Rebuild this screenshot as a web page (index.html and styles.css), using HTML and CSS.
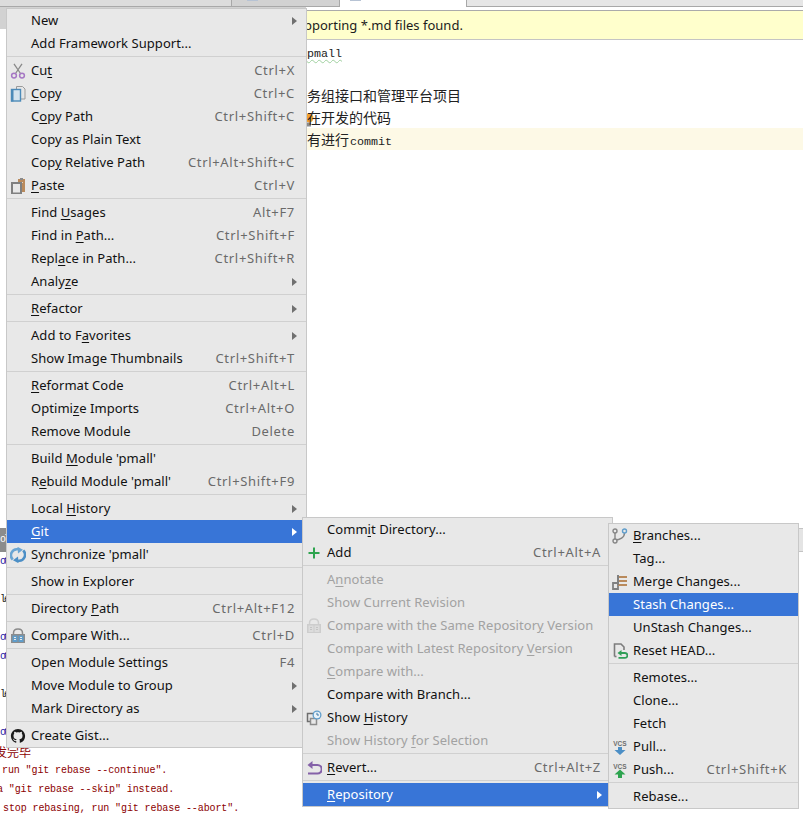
FILE: index.html
```html
<!DOCTYPE html>
<html lang="en">
<head>
<meta charset="utf-8">
<title>pmall</title>
<link rel="stylesheet" href="styles.css">
</head>
<body>
<svg class="defs" aria-hidden="true">
  <symbol id="i-cut" viewBox="0 0 16 16">
    <path d="M5.500 10.500 12 .8M10.500 10.500 4 .8" fill="none" stroke="#8a8a8a" stroke-width="1.300"/>
    <circle cx="4" cy="12.600" r="2.400" fill="none" stroke="#a678c4" stroke-width="1.500"/>
    <circle cx="12" cy="12.600" r="2.400" fill="none" stroke="#a678c4" stroke-width="1.500"/>
  </symbol>
  <symbol id="i-copy" viewBox="0 0 16 16">
    <path d="M6.500 .5h6l2.500 2.500v10h-8.500z" fill="#e6e6e6" stroke="#9a9a9a"/>
    <rect x="1.500" y="3.500" width="9" height="11.500" fill="#d4e3ee" stroke="#4c8ab8" stroke-width="1.400"/>
    <rect x="1" y="3" width="2.500" height="12.500" fill="#4c8ab8"/>
  </symbol>
  <symbol id="i-paste" viewBox="0 0 16 16">
    <rect x="8" y="1" width="7" height="13" fill="#b98a5c"/>
    <rect x="10" y="0" width="3" height="2" fill="#8a8a8a"/>
    <rect x="10" y="4" width="3" height="1" fill="#e6d6c4"/>
    <rect x="2" y="5" width="9" height="10.500" fill="#e8e8e8" stroke="#808080" stroke-width="2"/>
  </symbol>
  <symbol id="i-sync" viewBox="0 0 16 16">
    <path d="M2.800 12.500A6 6 0 0 1 8 2.300" fill="none" stroke="#6aa5d3" stroke-width="2.600"/>
    <path d="M7.500 -.2 13 2.800 8 6.500z" fill="#6aa5d3"/>
    <path d="M13.200 3.500A6 6 0 0 1 8 13.700" fill="none" stroke="#4c8fc6" stroke-width="2.600"/>
    <path d="M8.500 16.200 3 13.200 8 9.500z" fill="#4c8fc6"/>
  </symbol>
  <symbol id="i-compare" viewBox="0 0 16 16">
    <path d="M3.500 7V5C3.500 2.500 5.500 1 8 1s4.500 1.500 4.500 4V7" fill="none" stroke="#8a8a8a" stroke-width="1.500"/>
    <rect x="1" y="6" width="14" height="9" fill="#8c8c8c"/>
    <rect x="2.500" y="7.500" width="5" height="6.500" fill="#5f9dcb"/>
    <rect x="8.500" y="7.500" width="5" height="6.500" fill="#5f9dcb"/>
    <path d="M4 9.500h2M4 11.500h2M10 9.500h2M10 11.500h2" stroke="#e8e8e8"/>
  </symbol>
  <symbol id="i-compare-off" viewBox="0 0 16 16">
    <path d="M3.500 7V5C3.500 2.500 5.500 1 8 1s4.500 1.500 4.500 4V7" fill="none" stroke="#cfcfcf" stroke-width="1.500"/>
    <rect x="1" y="6" width="14" height="9" fill="#cdcdcd"/>
    <rect x="2.500" y="7.500" width="5" height="6.500" fill="#dcdcdc"/>
    <rect x="8.500" y="7.500" width="5" height="6.500" fill="#dcdcdc"/>
    <path d="M4 9.500h2M4 11.500h2M10 9.500h2M10 11.500h2" stroke="#c4c4c4"/>
  </symbol>
  <symbol id="i-github" viewBox="-1 -1 18 18">
    <path fill="#1a1a1a" d="M8 0C3.580 0 0 3.580 0 8c0 3.540 2.290 6.530 5.470 7.590.4.070.55-.17.55-.38 0-.19-.01-.82-.01-1.490-2.010.37-2.530-.49-2.690-.94-.09-.23-.48-.94-.82-1.130-.28-.15-.68-.52-.01-.53.63-.01 1.080.58 1.230.82.72 1.210 1.870.87 2.330.66.07-.52.28-.87.51-1.070-1.780-.2-3.640-.89-3.640-3.950 0-.87.31-1.590.82-2.150-.08-.2-.36-1.020.08-2.120 0 0 .67-.21 2.200.82.64-.18 1.320-.27 2-.27.68 0 1.360.09 2 .27 1.530-1.040 2.200-.82 2.200-.82.44 1.100.16 1.920.08 2.120.51.56.82 1.270.82 2.150 0 3.070-1.870 3.750-3.650 3.950.29.25.54.73.54 1.480 0 1.070-.01 1.930-.01 2.200 0 .21.15.46.55.38A8.013 8.013 0 0016 8c0-4.420-3.580-8-8-8z"/>
  </symbol>
  <symbol id="i-add" viewBox="0 0 16 16">
    <path d="M8 2.500v11M2.500 8h11" stroke="#2ea44f" stroke-width="2" fill="none"/>
  </symbol>
  <symbol id="i-history" viewBox="0 0 16 16">
    <rect x="1.500" y="3.500" width="8" height="8" fill="#e8e8e8" stroke="#6e6e6e" stroke-width="1.500"/>
    <rect x="4.500" y="8.500" width="6" height="6" fill="#e8e8e8" stroke="#8c8c8c" stroke-width="1.500"/>
    <circle cx="11" cy="5" r="4.500" fill="#5f9dcb"/>
    <circle cx="11" cy="5" r="3.200" fill="#e9f2f8"/>
    <path d="M11 2.800V5h2" fill="none" stroke="#3c79a8"/>
  </symbol>
  <symbol id="i-revert" viewBox="0 0 16 16">
    <path d="M4 5h7.500a3.200 3.200 0 0 1 0 8.500H2" fill="none" stroke="#8461a8" stroke-width="2.200"/>
    <path d="M6.500 1v8L1.500 5z" fill="#8461a8"/>
  </symbol>
  <symbol id="i-branches" viewBox="0 0 16 16">
    <path d="M3 4v8M3 12C8 12 12.500 9.500 12.500 5" fill="none" stroke="#858585" stroke-width="1.400"/>
    <circle cx="3" cy="3" r="2" fill="#e8e8e8" stroke="#858585" stroke-width="1.400"/>
    <circle cx="3" cy="13" r="2" fill="#e8e8e8" stroke="#858585" stroke-width="1.400"/>
    <circle cx="12.500" cy="3" r="2" fill="#e8e8e8" stroke="#5f9dcb" stroke-width="1.400"/>
  </symbol>
  <symbol id="i-merge" viewBox="0 0 16 16">
    <path d="M1 9h5v6H1z" fill="#e8e8e8" stroke="#808080" stroke-width="1.800"/>
    <path d="M6 2h9v2H6zM6 6h9v2H6zM6 10h9v2H6z" fill="#b98a5c"/>
    <path d="M5 1h2v10H5z" fill="#808080"/>
  </symbol>
  <symbol id="i-reset" viewBox="0 0 16 16">
    <path d="M2.500 13.500V1h6.500l3 3v3" fill="#e8e8e8" stroke="#7c7c7c" stroke-width="1.600"/>
    <path d="M2.500 13.500h2" stroke="#7c7c7c" stroke-width="1.600"/>
    <path d="M8 10h5a2.200 2.200 0 0 1 0 4.800H6.500" fill="none" stroke="#2f9e57" stroke-width="1.800"/>
    <path d="M9.500 7v6L5.500 10z" fill="#2f9e57"/>
  </symbol>
  <symbol id="i-pull" viewBox="0 0 16 16">
    <text class="vcs-text" x="8" y="6.500" text-anchor="middle">VCS</text>
    <path d="M6 8h4v3h3.500L8 16 2.500 11H6z" fill="#4c8fc6"/>
  </symbol>
  <symbol id="i-push" viewBox="0 0 16 16">
    <text class="vcs-text" x="8" y="6.500" text-anchor="middle">VCS</text>
    <path d="M8 7.500 13.500 12.500H10V16H6v-3.500H2.500z" fill="#2ea44f"/>
  </symbol>
</svg>

<div class="app">
  <header class="tabbar">
    <div class="tab-rest"></div>
    <div class="tab-inactive"><span class="tab-mark tab-mark-first"></span></div>
    <div class="tab-active"><span class="tab-mark"></span></div>
    <div class="tab-fill"></div>
  </header>

  <div class="workspace">
    <aside class="side"><div class="side-toolbar"></div></aside>
    <main class="editor">
      <div class="banner">pporting *.md files found.</div>
      <div class="code">
        <div class="line"><span class="squiggle">pmall</span></div>
        <div class="line"></div>
        <div class="line">务组接口和管理平台项目</div>
        <div class="line"><svg class="bulb" viewBox="0 0 8 14" aria-hidden="true"><circle cx="3" cy="5" r="4.500" fill="#f0a030"/><rect x="0" y="9.500" width="5" height="4" fill="#8a8a8a"/></svg><span class="over">在开发的代码</span></div>
        <div class="line line-current">有进行<span class="mono">commit</span></div>
      </div>
    </main>
  </div>

  <section class="console">
    <div class="console-head"><span class="console-tab">ol</span></div>
    <div class="console-line info">ot</div>
    <div class="console-line"></div>
    <div class="console-line plain">le</div>
    <div class="console-line"></div>
    <div class="console-line info">ot</div>
    <div class="console-line info">ot</div>
    <div class="console-line"></div>
    <div class="console-line plain">le</div>
    <div class="console-line"></div>
    <div class="console-line info">ot</div>
    <div class="console-line err err-cjk">发完毕</div>
    <div class="console-line err err-a">run "git rebase --continue".</div>
    <div class="console-line err err-b">a "git rebase --skip" instead.</div>
    <div class="console-line err err-c">stop rebasing, run "git rebase --abort".</div>
  </section>

  <nav class="menu menu-main">
    <div class="row"><span class="ico"></span><span class="label">New</span><i class="arrow"></i></div>
    <div class="row"><span class="ico"></span><span class="label">Add Framework Support...</span></div>
    <hr class="sep">
    <div class="row"><svg class="ico"><use href="#i-cut"/></svg><span class="label">Cu<u>t</u></span><span class="key">Ctrl+X</span></div>
    <div class="row"><svg class="ico"><use href="#i-copy"/></svg><span class="label"><u>C</u>opy</span><span class="key">Ctrl+C</span></div>
    <div class="row"><span class="ico"></span><span class="label">C<u>o</u>py Path</span><span class="key">Ctrl+Shift+C</span></div>
    <div class="row"><span class="ico"></span><span class="label">Copy as Plain Text</span></div>
    <div class="row"><span class="ico"></span><span class="label">Cop<u>y</u> Relative Path</span><span class="key">Ctrl+Alt+Shift+C</span></div>
    <div class="row"><svg class="ico"><use href="#i-paste"/></svg><span class="label"><u>P</u>aste</span><span class="key">Ctrl+V</span></div>
    <hr class="sep">
    <div class="row"><span class="ico"></span><span class="label">Find <u>U</u>sages</span><span class="key">Alt+F7</span></div>
    <div class="row"><span class="ico"></span><span class="label">Find in <u>P</u>ath...</span><span class="key">Ctrl+Shift+F</span></div>
    <div class="row"><span class="ico"></span><span class="label">Repl<u>a</u>ce in Path...</span><span class="key">Ctrl+Shift+R</span></div>
    <div class="row"><span class="ico"></span><span class="label">Analy<u>z</u>e</span><i class="arrow"></i></div>
    <hr class="sep">
    <div class="row"><span class="ico"></span><span class="label"><u>R</u>efactor</span><i class="arrow"></i></div>
    <hr class="sep">
    <div class="row"><span class="ico"></span><span class="label">Add to F<u>a</u>vorites</span><i class="arrow"></i></div>
    <div class="row"><span class="ico"></span><span class="label">Show Image Thumbnails</span><span class="key">Ctrl+Shift+T</span></div>
    <hr class="sep">
    <div class="row"><span class="ico"></span><span class="label"><u>R</u>eformat Code</span><span class="key">Ctrl+Alt+L</span></div>
    <div class="row"><span class="ico"></span><span class="label">Optimi<u>z</u>e Imports</span><span class="key">Ctrl+Alt+O</span></div>
    <div class="row"><span class="ico"></span><span class="label">Remove Module</span><span class="key">Delete</span></div>
    <hr class="sep">
    <div class="row"><span class="ico"></span><span class="label">Build <u>M</u>odule 'pmall'</span></div>
    <div class="row"><span class="ico"></span><span class="label">R<u>e</u>build Module 'pmall'</span><span class="key">Ctrl+Shift+F9</span></div>
    <hr class="sep">
    <div class="row"><span class="ico"></span><span class="label">Local <u>H</u>istory</span><i class="arrow"></i></div>
    <div class="row active"><span class="ico"></span><span class="label"><u>G</u>it</span><i class="arrow"></i></div>
    <div class="row"><svg class="ico"><use href="#i-sync"/></svg><span class="label">Synchronize 'pmall'</span></div>
    <hr class="sep">
    <div class="row"><span class="ico"></span><span class="label">Show in Explorer</span></div>
    <hr class="sep">
    <div class="row"><span class="ico"></span><span class="label">Directory <u>P</u>ath</span><span class="key">Ctrl+Alt+F12</span></div>
    <hr class="sep">
    <div class="row"><svg class="ico"><use href="#i-compare"/></svg><span class="label">Compare With...</span><span class="key">Ctrl+D</span></div>
    <hr class="sep">
    <div class="row"><span class="ico"></span><span class="label">Open Module Settings</span><span class="key">F4</span></div>
    <div class="row"><span class="ico"></span><span class="label">Move Module to Group</span><i class="arrow"></i></div>
    <div class="row"><span class="ico"></span><span class="label">Mark Directory as</span><i class="arrow"></i></div>
    <hr class="sep">
    <div class="row"><svg class="ico"><use href="#i-github"/></svg><span class="label">Create Gist...</span></div>
  </nav>

  <nav class="menu menu-git">
    <div class="row"><span class="ico"></span><span class="label">Comm<u>i</u>t Directory...</span></div>
    <div class="row"><svg class="ico"><use href="#i-add"/></svg><span class="label">Add</span><span class="key">Ctrl+Alt+A</span></div>
    <hr class="sep">
    <div class="row off"><span class="ico"></span><span class="label">A<u>n</u>notate</span></div>
    <div class="row off"><span class="ico"></span><span class="label">Show Current Revision</span></div>
    <div class="row off"><svg class="ico"><use href="#i-compare-off"/></svg><span class="label">Compare with the Same Repositor<u>y</u> Version</span></div>
    <div class="row off"><span class="ico"></span><span class="label">Compare with Latest Repository <u>V</u>ersion</span></div>
    <div class="row off"><span class="ico"></span><span class="label"><u>C</u>ompare with...</span></div>
    <div class="row"><span class="ico"></span><span class="label">Compare with Branch...</span></div>
    <div class="row"><svg class="ico"><use href="#i-history"/></svg><span class="label">Show <u>H</u>istory</span></div>
    <div class="row off"><span class="ico"></span><span class="label">Show History <u>f</u>or Selection</span></div>
    <hr class="sep">
    <div class="row"><svg class="ico"><use href="#i-revert"/></svg><span class="label"><u>R</u>evert...</span><span class="key">Ctrl+Alt+Z</span></div>
    <hr class="sep">
    <div class="row active"><span class="ico"></span><span class="label"><u>R</u>epository</span><i class="arrow arrow-git"></i></div>
  </nav>

  <nav class="menu menu-repo">
    <div class="row"><svg class="ico"><use href="#i-branches"/></svg><span class="label"><u>B</u>ranches...</span></div>
    <div class="row"><span class="ico"></span><span class="label">Tag...</span></div>
    <div class="row"><svg class="ico"><use href="#i-merge"/></svg><span class="label">Merge Changes...</span></div>
    <div class="row active"><span class="ico"></span><span class="label">Stash Changes...</span></div>
    <div class="row"><span class="ico"></span><span class="label">UnStash Changes...</span></div>
    <div class="row"><svg class="ico"><use href="#i-reset"/></svg><span class="label">Reset HEAD...</span></div>
    <hr class="sep">
    <div class="row"><span class="ico"></span><span class="label">Remotes...</span></div>
    <div class="row"><span class="ico"></span><span class="label">Clone...</span></div>
    <div class="row"><span class="ico"></span><span class="label">Fetch</span></div>
    <div class="row"><svg class="ico"><use href="#i-pull"/></svg><span class="label">Pull...</span></div>
    <div class="row"><svg class="ico"><use href="#i-push"/></svg><span class="label">Push...</span><span class="key">Ctrl+Shift+K</span></div>
    <hr class="sep">
    <div class="row"><span class="ico"></span><span class="label">Rebase...</span></div>
  </nav>
</div>
</body>
</html>
```

FILE: styles.css
```css
* { box-sizing: border-box; }
html, body { margin: 0; padding: 0; background: #fff; }
.defs { position: absolute; width: 0; height: 0; }
.vcs-text { font: 700 6.5px "Liberation Sans", sans-serif; fill: #6e6e6e; }

.app {
  position: relative;
  width: 803px;
  height: 815px;
  overflow: hidden;
  display: flex;
  flex-direction: column;
  background: #fff;
  font-family: "Noto Sans", "Open Sans", sans-serif;
}

/* tab strip */
.tabbar { display: flex; height: 11px; flex: none; border-bottom: 1px solid #ababab; }
.tab-rest { width: 231px; height: 7px; background: #dcdcdc; border-bottom: 1px solid #a8a8a8; }
.tab-inactive { position: relative; width: 109px; height: 7px; background: #d2d2d2; border: 1px solid #a8a8a8; border-top: 0; }
.tab-active { position: relative; width: 126px; background: #fff; }
.tab-fill { flex: 1; height: 7px; background: #e6e6e6; border-left: 1px solid #a8a8a8; border-bottom: 1px solid #a8a8a8; }
.tab-mark { display: block; width: 11px; height: 1px; margin-left: 10px; background: #b7c3d4; }
.tab-mark-first { margin-left: 15px; }

/* work area */
.workspace { display: flex; height: 517px; flex: none; }
.side { width: 306px; flex: none; }
.side-toolbar { height: 22px; margin-top: -4px; background: #d2d2d2; }
.editor { flex: 1; min-width: 0; margin-left: -2px; }
.banner {
  height: 29px;
  padding: 5px 0 0 0;
  background: #ffffcc;
  border-bottom: 1px solid #c4c4c4;
  font-size: 13px;
  line-height: 18px;
  color: #1c1c1c;
  white-space: nowrap;
}
.code { font: 14px/22px "Noto Sans CJK SC", "Liberation Mono", monospace; color: #222; padding-left: 3px; }
.line { position: relative; height: 22px; white-space: nowrap; }
.line-current { background: #fdf9e6; margin-left: -3px; padding-left: 3px; }
.over { position: relative; }
.squiggle { font: 11.67px/24px "Liberation Mono", monospace; text-decoration: underline wavy #9fd09f 1px; text-underline-offset: 2px; }
.mono { font: 11.67px/22px "Liberation Mono", monospace; margin-left: 1px; }
.bulb { position: absolute; left: -1px; top: 7px; width: 8px; height: 14px; }

/* console */
.console { flex: 1; min-height: 0; }
.console-head { display: flex; height: 24px; background: #e4e4e4; border-top: 1px solid #c4c4c4; border-bottom: 1px solid #c4c4c4; }
.console-tab { width: 40px; margin: -1px 0; background: #8c8c8c; color: #fff; font: 10px/24px "Liberation Mono", monospace; letter-spacing: -2px; }
.console-line { height: 19px; font: 10px/19px "Liberation Mono", monospace; white-space: pre; letter-spacing: -.1px; }
.info { color: #1a1aa6; letter-spacing: -2.5px; }
.plain { color: #222; letter-spacing: -2px; }
.err { color: #8b0000; }
.err-cjk { font: 12px/19px "Noto Sans CJK SC", sans-serif; margin-left: -5px; letter-spacing: 0; }
.err-a { padding-left: 2px; }
.err-b { margin-left: -3px; }
.err-c { padding-left: 3px; }

/* popup menus */
.menu {
  position: absolute;
  background: #e8e8e8;
  border: 1px solid #c8c8c8;
  font-size: 13px;
  letter-spacing: .05px;
  color: #111;
}
.menu-main { left: 6px; top: 8px; width: 301px; }
.menu-git { left: 302px; top: 517px; width: 311px; }
.menu-repo { left: 608px; top: 523px; width: 191px; }

.row { display: flex; align-items: center; height: 23px; white-space: nowrap; line-height: 23px; }
.ico { flex: none; width: 16px; height: 16px; margin: 0 5px 0 3px; }
.label { flex: 1; min-width: 0; }
.label u { text-underline-offset: 2px; text-decoration-thickness: 1px; }
.key { margin-right: 11px; color: #6a6a6a; letter-spacing: .68px; }
.arrow { flex: none; width: 0; height: 0; margin-right: 9px; border-left: 5px solid #707070; border-top: 4.5px solid transparent; border-bottom: 4.5px solid transparent; }
.arrow-git { margin-right: 10px; }
.off { color: #a2a2a2; }
.active { background: #3875d7; color: #fff; }
.active .arrow { border-left-color: #fff; }
.sep { height: 4px; margin: 0; border: 0; background: linear-gradient(#d0d0d0, #d0d0d0) 0 1px / 100% 1px no-repeat; }
```
